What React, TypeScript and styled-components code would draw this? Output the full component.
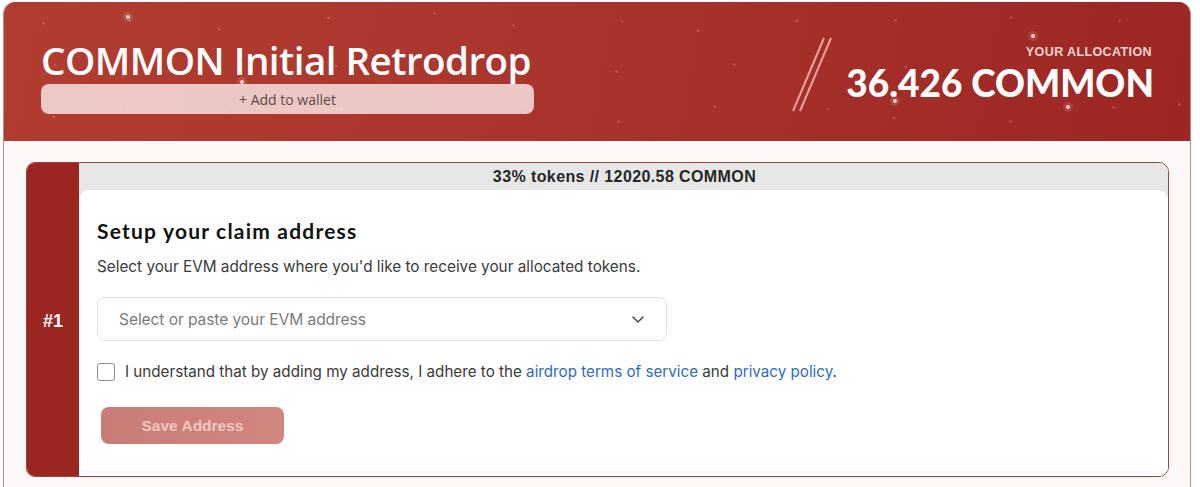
import React from "react";
import styled, { createGlobalStyle } from "styled-components";

const Global = createGlobalStyle`
  html, body { margin: 0; padding: 0; background: #ffffff; }
  body { font-family: "Inter", "Liberation Sans", sans-serif; }
  * { box-sizing: border-box; }
`;

const Page = styled.div`
  padding: 2px 9px 0 3px;
  height: 487px;
  overflow: hidden;
`;

const Frame = styled.div`
  border-radius: 12px 12px 0 0;
  border-left: 1px solid #b98c88;
  border-right: 1px solid #b98c88;
  background: #fdf9f8;
  overflow: hidden;
  min-height: 500px;
`;

const Header = styled.header`
  position: relative;
  height: 139px;
  background: linear-gradient(100deg, #b13d31 0%, #aa352d 45%, #9c2622 100%);
  display: flex;
  justify-content: space-between;
  align-items: flex-start;
  padding: 0 36px 0 37px;
  overflow: hidden;
`;

const Stars = styled.svg`
  position: absolute;
  inset: 0;
  pointer-events: none;
`;

const TitleBlock = styled.div`
  position: relative;
  display: flex;
  flex-direction: column;
  align-items: stretch;
  width: 493px;
  padding-top: 35px;
`;

const Title = styled.h1`
  margin: 0;
  font-family: "Open Sans", "Liberation Sans", sans-serif;
  font-weight: 600;
  font-size: 38.6px;
  line-height: 46px;
  color: #ffffff;
  letter-spacing: -0.55px;
  white-space: nowrap;
`;

const WalletButton = styled.button`
  margin-top: 1px;
  height: 30px;
  border: none;
  border-radius: 8px;
  background: rgba(250, 232, 230, 0.82);
  color: #5a4a48;
  font-family: "Open Sans", "Liberation Sans", sans-serif;
  font-size: 14px;
  font-weight: 500;
  cursor: pointer;
`;

const AllocBlock = styled.div`
  position: relative;
  display: flex;
  align-items: flex-start;
  padding-top: 35px;
`;

const Slashes = styled.svg`
  margin-right: 14px;
`;

const AllocText = styled.div`
  display: flex;
  flex-direction: column;
  align-items: flex-end;
  padding-top: 7px;
`;

const AllocLabel = styled.div`
  font-family: "Liberation Sans", Arial, sans-serif;
  font-weight: 700;
  font-size: 12.5px;
  letter-spacing: 0.4px;
  color: #f3d6d2;
  line-height: 16px;
  margin-right: 2px;
`;

const AllocValue = styled.div`
  font-family: "Lato", "Liberation Sans", sans-serif;
  font-weight: 900;
  font-size: 37px;
  line-height: 46px;
  color: #ffffff;
  letter-spacing: 0px;
  white-space: nowrap;
`;

const Body = styled.main`
  padding: 21px 21px 0 22px;
`;

const Card = styled.section`
  display: flex;
  height: 315px;
  border: 1px solid #9a423c;
  border-radius: 9px 10px 10px 9px;
  overflow: hidden;
`;

const StepColumn = styled.div`
  width: 52px;
  flex: none;
  background: #9b2520;
  display: flex;
  align-items: center;
  justify-content: center;
  color: #ffffff;
  font-family: "Liberation Sans", Arial, sans-serif;
  font-weight: 700;
  font-size: 18px;
  padding-top: 4px;
`;

const Content = styled.div`
  flex: 1;
  display: flex;
  flex-direction: column;
  background: #e8e7e7;
`;

const Strip = styled.div`
  height: 27px;
  flex: none;
  display: flex;
  align-items: center;
  justify-content: center;
  font-family: "Liberation Sans", Arial, sans-serif;
  font-weight: 700;
  font-size: 16px;
  letter-spacing: 0.4px;
  color: #262626;
  padding-left: 2px;
`;

const Panel = styled.div`
  flex: 1;
  background: #ffffff;
  border-radius: 10px 10px 0 0;
  padding: 29px 18px 0 18px;
  display: flex;
  flex-direction: column;
  align-items: flex-start;
`;

const PanelTitle = styled.h2`
  margin: 0;
  font-family: "Lato", "Liberation Sans", sans-serif;
  font-weight: 700;
  font-size: 21px;
  line-height: 24px;
  color: #121212;
  letter-spacing: 1.2px;
`;

const Description = styled.p`
  margin: 13px 0 0;
  font-family: "Inter", "Liberation Sans", sans-serif;
  font-size: 15.3px;
  line-height: 22px;
  color: #3a3a3a;
  letter-spacing: 0px;
`;

const SelectBox = styled.div`
  margin-top: 19px;
  width: 570px;
  height: 44px;
  border: 1px solid #e2e2e2;
  border-radius: 8px;
  display: flex;
  align-items: center;
  justify-content: space-between;
  padding: 0 20px 0 21px;
  font-family: "Inter", "Liberation Sans", sans-serif;
  font-size: 15.6px;
  color: #7b7b7b;
  letter-spacing: -0.1px;
`;

const CheckRow = styled.label`
  margin-top: 20px;
  display: flex;
  align-items: center;
  gap: 10px;
  font-family: "Inter", "Liberation Sans", sans-serif;
  font-size: 15.2px;
  line-height: 22px;
  color: #3a3a3a;
  letter-spacing: 0px;
  white-space: nowrap;
`;

const CheckBox = styled.span`
  width: 18px;
  height: 18px;
  border: 1px solid #8e8e8e;
  border-radius: 3px;
  background: #ffffff;
  flex: none;
`;

const Link = styled.a`
  color: #2f6cc1;
  text-decoration: none;
`;

const SaveButton = styled.button`
  margin: 24px 0 0 4px;
  width: 183px;
  height: 37px;
  border: none;
  border-radius: 8px;
  background: linear-gradient(90deg, #c97c76 0%, #d2867f 100%);
  color: #efc9c5;
  font-family: "Liberation Sans", Arial, sans-serif;
  font-weight: 700;
  font-size: 15.5px;
  cursor: default;
`;

type Dot = { x: number; y: number; r: number; o: number };

const faintDots: Dot[] = (() => {
  const out: Dot[] = [];
  let seed = 7;
  const rnd = () => {
    seed = (seed * 9301 + 49297) % 233280;
    return seed / 233280;
  };
  for (let y = 10; y < 139; y += 46) {
    for (let x = 20; x < 1190; x += 96) {
      out.push({ x: x + rnd() * 40, y: y + rnd() * 20, r: 1.3, o: 0.14 + rnd() * 0.1 });
    }
  }
  return out;
})();

const haloDots = [
  { x: 124, y: 15 },
  { x: 1029, y: 34 },
  { x: 891, y: 99 },
  { x: 1064, y: 105 },
  { x: 238, y: 80 },
];

export default function App() {
  return (
    <>
      <Global />
      <Page>
        <Frame>
          <Header>
            <Stars width="100%" height="139">
              {faintDots.map((d, i) => (
                <circle key={i} cx={d.x} cy={d.y} r={d.r} fill="#ffffff" opacity={d.o} />
              ))}
              {haloDots.map((d, i) => (
                <g key={"h" + i}>
                  <circle cx={d.x} cy={d.y} r={5} fill="#ffffff" opacity={0.12} />
                  <circle cx={d.x} cy={d.y} r={2} fill="#ffffff" opacity={0.75} />
                </g>
              ))}
            </Stars>
            <TitleBlock>
              <Title>COMMON Initial Retrodrop</Title>
              <WalletButton>+ Add to wallet</WalletButton>
            </TitleBlock>
            <AllocBlock>
              <Slashes width="40" height="76" viewBox="0 0 40 76">
                <line x1="1" y1="74" x2="32" y2="1" stroke="#f2b9b0" strokeWidth="2" opacity="0.85" />
                <line x1="8" y1="74" x2="39" y2="1" stroke="#f2b9b0" strokeWidth="2" opacity="0.85" />
              </Slashes>
              <AllocText>
                <AllocLabel>YOUR ALLOCATION</AllocLabel>
                <AllocValue>36.426 COMMON</AllocValue>
              </AllocText>
            </AllocBlock>
          </Header>
          <Body>
            <Card>
              <StepColumn>#1</StepColumn>
              <Content>
                <Strip>33% tokens // 12020.58 COMMON</Strip>
                <Panel>
                  <PanelTitle>Setup your claim address</PanelTitle>
                  <Description>
                    Select your EVM address where you'd like to receive your allocated tokens.
                  </Description>
                  <SelectBox>
                    <span>Select or paste your EVM address</span>
                    <svg width="16" height="16" viewBox="0 0 16 16" fill="none">
                      <path d="M3 6l5 5 5-5" stroke="#444" strokeWidth="1.5" strokeLinecap="round" strokeLinejoin="round" />
                    </svg>
                  </SelectBox>
                  <CheckRow>
                    <CheckBox />
                    <span>
                      I understand that by adding my address, I adhere to the{" "}
                      <Link href="#">airdrop terms of service</Link> and{" "}
                      <Link href="#">privacy policy</Link>.
                    </span>
                  </CheckRow>
                  <SaveButton disabled>Save Address</SaveButton>
                </Panel>
              </Content>
            </Card>
          </Body>
        </Frame>
      </Page>
    </>
  );
}
